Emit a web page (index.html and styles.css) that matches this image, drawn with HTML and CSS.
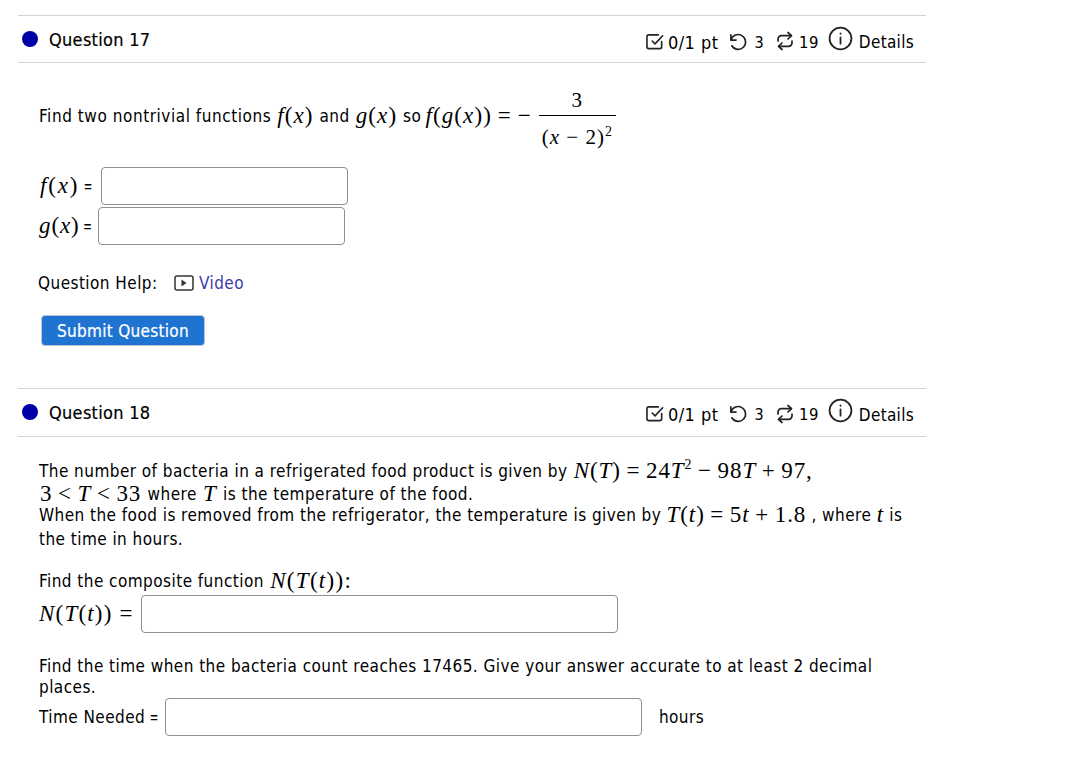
FILE: index.html
```html
<!DOCTYPE html>
<html lang="en">
<head>
<meta charset="utf-8">
<title>Questions</title>
<link rel="stylesheet" href="styles.css">
</head>
<body>
<main class="page">
  <section class="question q17">
    <header class="qhead">
      <span class="dot"></span>
      <h2 class="qtitle">Question 17</h2>
      <div class="meta">
        <svg class="ico" viewBox="0 0 20 20"><path d="M16.500 10v5.500a2 2 0 0 1-2 2H3a2 2 0 0 1-2-2V5a2 2 0 0 1 2-2H13"/><path d="M6.500 9.500l3 3L17.500 4"/></svg>
        <span class="m1">0/1 pt</span>
        <svg class="ico" viewBox="0 0 20 20"><path d="M3 3v5.500h5.500"/><path d="M3.200 8.400A7.800 7.800 0 1 1 4 14.500"/></svg>
        <span class="m2">3</span>
        <svg class="ico rep" viewBox="0 0 20 20"><path d="M13 1.500l3.500 3.200L13 8"/><path d="M16 4.700H6.500A3.500 3.500 0 0 0 3 8.200v1.800"/><path d="M7 18.500l-3.500-3.200L7 12"/><path d="M4 15.300h9.500A3.500 3.500 0 0 0 17 11.800V10"/></svg>
        <span class="m3">19</span>
        <svg class="ico info" viewBox="0 0 24 24"><circle cx="12" cy="12" r="10.500"/><path d="M12 11v6"/><path d="M12 7v.5"/></svg>
        <span class="m4">Details</span>
      </div>
    </header>
    <div class="qbody">
      <p class="line first">Find two nontrivial functions <span class="m"><i>f</i>(<i>x</i>)</span> and <span class="m"><i>g</i>(<i>x</i>)</span> so <span class="m mfg"><i>f</i>(<i>g</i>(<i>x</i>)) = &minus;</span><span class="frac"><span class="num">3</span><span class="den">(<i>x</i> &minus; 2)<sup>2</sup></span></span></p>
      <div class="field fx"><label class="m"><i>f</i>(<i>x</i>)</label><span class="eq">=</span><input class="inp" type="text"></div>
      <div class="field gx"><label class="m"><i>g</i>(<i>x</i>)</label><span class="eq">=</span><input class="inp" type="text"></div>
      <p class="help">Question Help: <svg class="play" viewBox="0 0 20 16"><rect x="1" y="1" width="18" height="14" rx="2"/><path class="tri" d="M7.500 4.500l5 3.500-5 3.500z"/></svg> <a class="link" href="#">Video</a></p>
      <button class="submit" type="button">Submit Question</button>
    </div>
  </section>
  <section class="question q18">
    <header class="qhead">
      <span class="dot"></span>
      <h2 class="qtitle">Question 18</h2>
      <div class="meta">
        <svg class="ico" viewBox="0 0 20 20"><path d="M16.500 10v5.500a2 2 0 0 1-2 2H3a2 2 0 0 1-2-2V5a2 2 0 0 1 2-2H13"/><path d="M6.500 9.500l3 3L17.500 4"/></svg>
        <span class="m1">0/1 pt</span>
        <svg class="ico" viewBox="0 0 20 20"><path d="M3 3v5.500h5.500"/><path d="M3.200 8.400A7.800 7.800 0 1 1 4 14.500"/></svg>
        <span class="m2">3</span>
        <svg class="ico rep" viewBox="0 0 20 20"><path d="M13 1.500l3.500 3.200L13 8"/><path d="M16 4.700H6.500A3.500 3.500 0 0 0 3 8.200v1.800"/><path d="M7 18.500l-3.500-3.200L7 12"/><path d="M4 15.300h9.500A3.500 3.500 0 0 0 17 11.800V10"/></svg>
        <span class="m3">19</span>
        <svg class="ico info" viewBox="0 0 24 24"><circle cx="12" cy="12" r="10.500"/><path d="M12 11v6"/><path d="M12 7v.5"/></svg>
        <span class="m4">Details</span>
      </div>
    </header>
    <div class="qbody">
      <div class="para">
        <div class="l l1">The number of bacteria in a refrigerated food product is given by <span class="m"><i>N</i>(<i>T</i>) = 24<i>T</i><sup>2</sup> &minus; 98<i>T</i> + 97,</span></div>
        <div class="l l2"><span class="m">3 &lt; <i>T</i> &lt; 33</span> where <span class="m"><i>T</i></span> is the temperature of the food.</div>
        <div class="l l3">When the food is removed from the refrigerator, the temperature is given by <span class="m"><i>T</i>(<i>t</i>) = 5<i>t</i> + 1.8</span> , where <span class="m"><i>t</i></span> is</div>
        <div class="l l4">the time in hours.</div>
      </div>
      <div class="l l5">Find the composite function <span class="m"><i>N</i>(<i>T</i>(<i>t</i>)):</span></div>
      <div class="field nx"><label class="m"><i>N</i>(<i>T</i>(<i>t</i>)) =</label><input class="inp" type="text"></div>
      <div class="l l6">Find the time when the bacteria count reaches 17465. Give your answer accurate to at least 2 decimal</div>
      <div class="l l7">places.</div>
      <div class="field tx"><label>Time Needed</label><span class="eq">=</span><input class="inp" type="text"><span class="unit">hours</span></div>
    </div>
  </section>
</main>
</body>
</html>
```
FILE: styles.css
```css
* { box-sizing: border-box; }
html, body { margin: 0; background: #fff; }
body { font-family: "DejaVu Sans Condensed", "DejaVu Sans", sans-serif; font-size: 17px; letter-spacing: 0.45px; color: #000; }
.page { width: 908px; margin-left: 18px; padding-top: 15px; }
.qhead { display: flex; align-items: center; height: 48px; border-top: 1px solid #d3d3d3; border-bottom: 1px solid #d3d3d3; padding-left: 4px; }
.q18 .qhead { height: 49px; }
.q18 .meta { padding-top: 4px; }
.dot { width: 16px; height: 16px; border-radius: 50%; background: #0000a8; flex: none; margin-top: -1px; }
.qtitle { margin: 0 0 0 11px; font-size: 18px; letter-spacing: 0.3px; font-weight: 400; -webkit-text-stroke: 0.2px #000; }
.meta { margin-left: auto; display: flex; align-items: center; padding: 6px 12px 0 0; font-size: 17px; }
.ico { width: 19px; height: 19px; fill: none; stroke: #222; stroke-width: 1.700; stroke-linecap: round; stroke-linejoin: round; flex: none; margin-top: -2px; }
.rep { width: 20px; height: 20px; }
.info { width: 25px; height: 25px; margin-top: -8px; stroke-width: 1.700; }
.m1 { margin: 0 10px 0 3px; font-size: 18px; }
.m2 { margin: 0 11px 0 7px; font-size: 16px; }
.m3 { margin: 0 9px 0 4px; font-size: 16.500px; }
.m4 { margin-left: 6px; letter-spacing: 0.3px; }
.qbody { padding-left: 21px; }
.m { font-family: "Liberation Serif", serif; font-size: 23px; letter-spacing: 0.9px; word-spacing: -1px; }
.m i { font-style: italic; }
.m sup, .den sup { font-size: 14px; line-height: 0; }
.line { margin: 0; }
.first { display: flex; align-items: center; height: 80px; white-space: pre; margin-top: 13px; letter-spacing: 0.55px; }
.first .m { margin: 0 0.5px; letter-spacing: 1.100px; }
.first .mfg { margin: 0 0 0 -1.500px; }
.frac { display: inline-flex; flex-direction: column; align-items: center; font-family: "Liberation Serif", serif; font-size: 21px; letter-spacing: 1px; margin: 0 0 -6px 7px; }
.num { padding-bottom: 2px; }
.den { border-top: 1px solid #000; padding: 9px 3px 0; }
.field { display: flex; align-items: center; }
.inp { display: block; width: 247px; height: 38px; border: 1px solid #8f8f8f; border-radius: 4px; background: #fff; padding: 0; }
.fx { margin-top: 11px; height: 38px; }
.fx .m { margin: 0 0 0 1px; letter-spacing: 1.800px; }
.fx .eq { margin-right: 9px; }
.gx { margin-top: 2px; height: 38px; }
.gx .m { margin-right: -1px; }
.eq { font-family: "Liberation Sans", sans-serif; font-size: 13px; font-weight: 700; letter-spacing: 0; margin: 0 7px 0 5px; }
.help { margin: 26px 0 0 -1px; height: 24px; display: flex; align-items: center; white-space: pre; }
.play { width: 20px; height: 16px; fill: none; stroke: #333; stroke-width: 1.500; margin: 0 5px 0 11px; }
.tri { fill: #333; stroke: none; }
.link { color: #3c3ca8; text-decoration: none; }
.submit { display: block; margin: 20px 0 0 2px; width: 164px; height: 31px; background: #1f74d2; border: 1px solid #b9c6d6; border-radius: 4px; color: #fff; font: inherit; letter-spacing: 0.3px; -webkit-text-stroke: 0.2px #fff; padding: 0; }
.q18 { margin-top: 42px; }
.para { margin-top: 21px; }
.l { white-space: pre; }
.l1 .m, .l2 .m { margin: 0 1px; }
.l1 { height: 25px; display: flex; align-items: center; }
.l2 { height: 20px; display: flex; align-items: center; padding-top: 2px; }
.l3 { height: 23px; display: flex; align-items: center; }
.l4 { height: 24px; display: flex; align-items: center; padding-top: 2px; }
.l5 { margin-top: 17px; height: 27px; display: flex; align-items: center; }
.l5 .m { margin-left: 1px; letter-spacing: 1.300px; }
.nx { margin-top: 1px; }
.nx .m { letter-spacing: 1.200px; word-spacing: 0; }
.nx .inp { width: 477px; margin-left: 7px; }
.l6 { margin-top: 21px; height: 22px; display: flex; align-items: center; padding-top: 2px; }
.l7 { height: 22px; display: flex; align-items: center; }
.tx { margin-top: 0; }
.tx .inp { width: 477px; }
.unit { margin-left: 17px; }
```
